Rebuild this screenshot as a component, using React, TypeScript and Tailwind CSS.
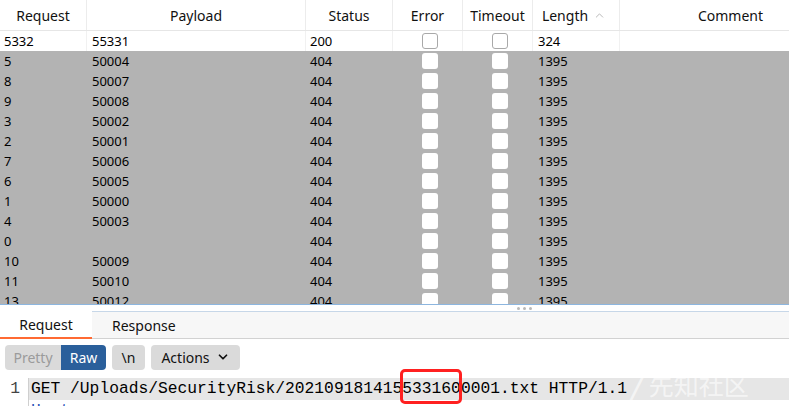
import React from 'react';
import { ChevronUp, ChevronDown } from 'lucide-react';

type Row = { req: string; payload: string; status: string; length: string };

const ROWS: Row[] = [
  { req: '5', payload: '50004', status: '404', length: '1395' },
  { req: '8', payload: '50007', status: '404', length: '1395' },
  { req: '9', payload: '50008', status: '404', length: '1395' },
  { req: '3', payload: '50002', status: '404', length: '1395' },
  { req: '2', payload: '50001', status: '404', length: '1395' },
  { req: '7', payload: '50006', status: '404', length: '1395' },
  { req: '6', payload: '50005', status: '404', length: '1395' },
  { req: '1', payload: '50000', status: '404', length: '1395' },
  { req: '4', payload: '50003', status: '404', length: '1395' },
  { req: '0', payload: '', status: '404', length: '1395' },
  { req: '10', payload: '50009', status: '404', length: '1395' },
  { req: '11', payload: '50010', status: '404', length: '1395' },
  { req: '13', payload: '50012', status: '404', length: '1395' },
];

const HeaderCell: React.FC<{ w: string; children: React.ReactNode; last?: boolean }> = ({ w, children, last }) => (
  <div className={`${w} h-full flex items-center justify-center ${last ? 'pl-[52px]' : 'border-r border-[#ececec]'}`}>
    {children}
  </div>
);

const Check: React.FC<{ bordered?: boolean }> = ({ bordered }) => (
  <div
    className={`w-[16px] h-[16px] rounded-[3px] bg-white ${bordered ? 'border border-[#a9a9a9]' : ''}`}
  />
);

const DataRow: React.FC<{ row: Row; selected?: boolean }> = ({ row, selected }) => {
  const sep = selected ? 'border-r border-[#f1f1f1]' : '';
  return (
    <div className={`flex h-[20px] text-[13px] leading-[20px] text-black ${selected ? 'bg-white' : 'bg-[#b3b3b3]'}`}>
      <div className={`w-[87px] pl-[4px] ${sep}`}>{row.req}</div>
      <div className={`w-[219px] pl-[5px] ${sep}`}>{row.payload}</div>
      <div className={`w-[87px] pl-[4px] ${sep}`}>{row.status}</div>
      <div className={`w-[70px] flex items-center justify-center pl-[4px] ${sep}`}>
        <Check bordered={selected} />
      </div>
      <div className={`w-[70px] flex items-center justify-center pl-[4px] ${sep}`}>
        <Check bordered={selected} />
      </div>
      <div className={`w-[87px] pl-[5px] ${sep}`}>{row.length}</div>
      <div className="flex-1" />
    </div>
  );
};

const App: React.FC = () => {
  return (
    <div className="w-[789px] h-[406px] overflow-hidden bg-white relative font-['Noto_Sans',sans-serif]">
      {/* results table */}
      <div className="h-[304px] overflow-hidden">
        <div className="flex h-[31px] border-b border-[#e6e6e6] text-[14px] text-[#111]">
          <HeaderCell w="w-[87px]">Request</HeaderCell>
          <HeaderCell w="w-[219px]">Payload</HeaderCell>
          <HeaderCell w="w-[87px]">Status</HeaderCell>
          <HeaderCell w="w-[70px]">Error</HeaderCell>
          <HeaderCell w="w-[70px]">Timeout</HeaderCell>
          <HeaderCell w="w-[87px]">
            <span className="flex items-center gap-[5px] pr-[4px]">
              Length <ChevronUp className="w-[13px] h-[13px] text-[#b5b5b5]" strokeWidth={1.75} />
            </span>
          </HeaderCell>
          <HeaderCell w="flex-1" last>
            Comment
          </HeaderCell>
        </div>
        <DataRow row={{ req: '5332', payload: '55331', status: '200', length: '324' }} selected />
        {ROWS.map((r) => (
          <DataRow key={r.req} row={r} />
        ))}
      </div>

      {/* splitter */}
      <div className="h-[7px] border-t border-[#8db6df] bg-white flex justify-end pr-[257px] pt-[2px] gap-[3px]">
        <span className="w-[3px] h-[3px] rounded-full bg-[#b9b9b9]" />
        <span className="w-[3px] h-[3px] rounded-full bg-[#b9b9b9]" />
        <span className="w-[3px] h-[3px] rounded-full bg-[#b9b9b9]" />
      </div>

      {/* tabs */}
      <div className="flex h-[28px] border-b border-[#d2d2d2] text-[14px] text-[#111]">
        <div className="w-[92px] bg-white border-b-2 border-[#ff6a33] flex items-center justify-center -mb-px">
          Request
        </div>
        <div className="flex-1 bg-[#f7f7f7] border-t border-[#c7d7e8] flex items-center pl-[20px]">
          Response
        </div>
      </div>

      {/* toolbar */}
      <div className="flex items-center gap-[6px] px-[5px] pt-[5px] h-[31px] text-[14px]">
        <div className="flex h-[25px] rounded-[4px] overflow-hidden">
          <div className="w-[56px] bg-[#dadada] text-[#9b9b9b] flex items-center justify-center">Pretty</div>
          <div className="w-[45px] bg-[#2a5f9b] text-white flex items-center justify-center">Raw</div>
        </div>
        <div className="w-[33px] h-[25px] rounded-[4px] bg-[#dadada] text-[#111] flex items-center justify-center">
          \n
        </div>
        <div className="w-[89px] h-[25px] rounded-[4px] bg-[#dadada] text-[#111] flex items-center justify-center gap-[6px]">
          Actions <ChevronDown className="w-[14px] h-[14px]" strokeWidth={3} />
        </div>
      </div>

      {/* editor */}
      <div className="flex mt-[8px] font-['Liberation_Mono',monospace] text-[16.3px] leading-[22px]">
        <div className="w-[29px] border-r border-[#cfcfcf] text-[#444] text-right pr-[8px]">
          <div>1</div>
        </div>
        <div className="flex-1 whitespace-pre">
          <div className="bg-[#e6e6e6] pl-[2px] text-black">GET /Uploads/SecurityRisk/2021091814155331600001.txt HTTP/1.1</div>
          <div className="pl-[2px]">
            <span className="text-[#1f4fb5]">Host</span>
            <span className="text-black">: xxxxxxxx.xxx</span>
          </div>
        </div>
      </div>

      {/* watermark */}
      <div className="absolute left-[630px] top-[371px] flex items-center gap-[8px] text-white/60 font-['Noto_Sans_CJK_SC',sans-serif] text-[25px] leading-[27px] pointer-events-none">
        <span className="font-bold italic text-[28px]">/</span>
        <span>先知社区</span>
      </div>

      {/* highlight box */}
      <div className="absolute left-[400px] top-[369px] w-[62px] h-[35px] border-[3px] border-[#ff2020] rounded-[5px]" />
    </div>
  );
};

export default App;
